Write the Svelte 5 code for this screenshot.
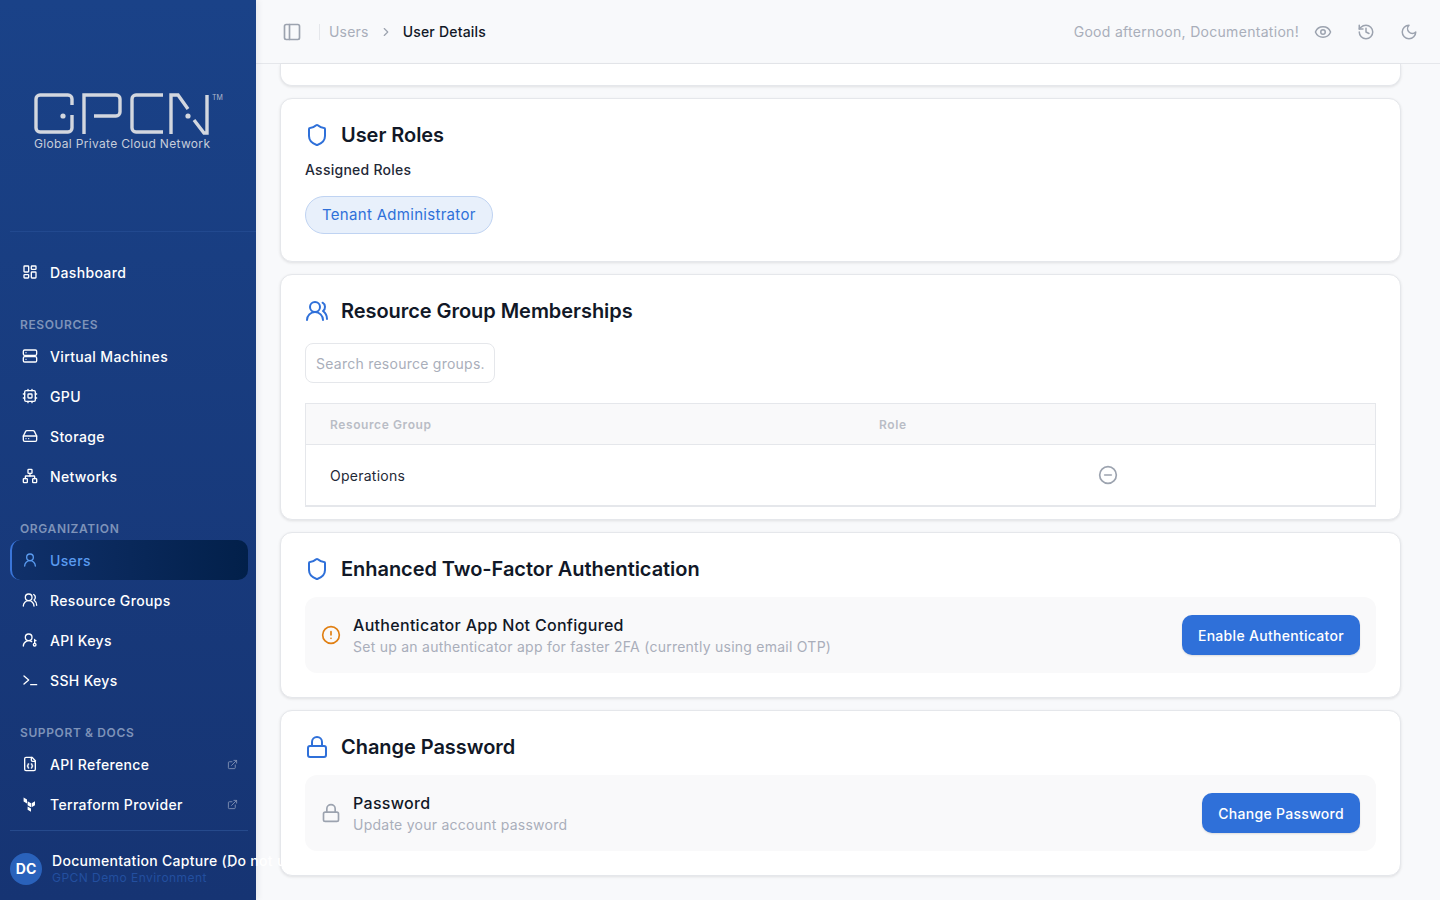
<script>
  const icons = {
    dashboard: '<rect width="7" height="9" x="3" y="3" rx="1"/><rect width="7" height="5" x="14" y="3" rx="1"/><rect width="7" height="9" x="14" y="12" rx="1"/><rect width="7" height="5" x="3" y="16" rx="1"/>',
    server: '<rect width="20" height="8" x="2" y="3" rx="2"/><rect width="20" height="8" x="2" y="13" rx="2"/><path d="M6 7h.01M6 17h.01"/>',
    cpu: '<rect width="16" height="16" x="4" y="4" rx="2"/><rect width="6" height="6" x="9" y="9" rx="1"/><path d="M15 2v2M15 20v2M2 15h2M2 9h2M20 15h2M20 9h2M9 2v2M9 20v2"/>',
    drive: '<path d="M22 12H2"/><path d="M5.45 5.11 2 12v6a2 2 0 0 0 2 2h16a2 2 0 0 0 2-2v-6l-3.45-6.89A2 2 0 0 0 16.76 4H7.24a2 2 0 0 0-1.79 1.11z"/><path d="M6 16h.01M10 16h.01"/>',
    network: '<rect x="16" y="16" width="6" height="6" rx="1"/><rect x="2" y="16" width="6" height="6" rx="1"/><rect x="9" y="2" width="6" height="6" rx="1"/><path d="M5 16v-3a1 1 0 0 1 1-1h12a1 1 0 0 1 1 1v3"/><path d="M12 12V8"/>',
    user: '<circle cx="12" cy="8" r="5"/><path d="M20 21a8 8 0 0 0-16 0"/>',
    users: '<path d="M18 21a8 8 0 0 0-16 0"/><circle cx="10" cy="8" r="5"/><path d="M22 20c0-3.37-2-6.5-4-8a5 5 0 0 0-.45-8.3"/>',
    userkey: '<circle cx="10" cy="8" r="5"/><path d="M2 21a8 8 0 0 1 12.5-6.6"/><circle cx="19" cy="19" r="2"/><path d="M19 17v-6M19 13h2"/>',
    terminal: '<path d="m3 18 7-6-7-6"/><path d="M13 19h9"/>',
    filecode: '<path d="M15 2H6a2 2 0 0 0-2 2v16a2 2 0 0 0 2 2h12a2 2 0 0 0 2-2V7Z"/><path d="M14 2v4a2 2 0 0 0 2 2h4"/><path d="M10 12a1 1 0 0 0-1 1v1a1 1 0 0 1-1 1 1 1 0 0 1 1 1v1a1 1 0 0 0 1 1"/><path d="M14 18a1 1 0 0 0 1-1v-1a1 1 0 0 1 1-1 1 1 0 0 1-1-1v-1a1 1 0 0 0-1-1"/>',
    panel: '<rect width="18" height="18" x="3" y="3" rx="2"/><path d="M9 3v18"/>',
    chevron: '<path d="m9 18 6-6-6-6"/>',
    eye: '<path d="M2.062 12.348a1 1 0 0 1 0-.696 10.75 10.75 0 0 1 19.876 0 1 1 0 0 1 0 .696 10.75 10.75 0 0 1-19.876 0"/><circle cx="12" cy="12" r="3"/>',
    history: '<path d="M3 12a9 9 0 1 0 9-9 9.75 9.75 0 0 0-6.74 2.74L3 8"/><path d="M3 3v5h5"/><path d="M12 7v5l4 2"/>',
    moon: '<path d="M12 3a6 6 0 0 0 9 9 9 9 0 1 1-9-9Z"/>',
    shield: '<path d="M20 13c0 5-3.5 7.5-7.66 8.95a1 1 0 0 1-.67-.01C7.5 20.5 4 18 4 13V6a1 1 0 0 1 1-1c2 0 4.5-1.2 6.24-2.72a1.17 1.17 0 0 1 1.52 0C14.51 3.81 17 5 19 5a1 1 0 0 1 1 1z"/>',
    lock: '<rect width="18" height="11" x="3" y="11" rx="2"/><path d="M7 11V7a5 5 0 0 1 10 0v4"/>',
    alert: '<circle cx="12" cy="12" r="10"/><path d="M12 8v4M12 16h.01"/>',
    minus: '<circle cx="12" cy="12" r="10"/><path d="M8 12h8"/>',
    external: '<path d="M15 3h6v6"/><path d="M10 14 21 3"/><path d="M18 13v6a2 2 0 0 1-2 2H5a2 2 0 0 1-2-2V8a2 2 0 0 1 2-2h6"/>',
  };

  const sections = [
    { title: 'RESOURCES', items: [
      { label: 'Virtual Machines', icon: 'server' },
      { label: 'GPU', icon: 'cpu' },
      { label: 'Storage', icon: 'drive' },
      { label: 'Networks', icon: 'network' },
    ]},
    { title: 'ORGANIZATION', items: [
      { label: 'Users', icon: 'user', active: true },
      { label: 'Resource Groups', icon: 'users' },
      { label: 'API Keys', icon: 'userkey' },
      { label: 'SSH Keys', icon: 'terminal' },
    ]},
    { title: 'SUPPORT & DOCS', items: [
      { label: 'API Reference', icon: 'filecode', external: true },
      { label: 'Terraform Provider', icon: 'terraform', external: true },
    ]},
  ];
</script>

{#snippet icon(name, size, cls)}
  <svg class={cls} width={size} height={size} viewBox="0 0 24 24" fill="none" stroke="currentColor" stroke-width="2" stroke-linecap="round" stroke-linejoin="round">{@html icons[name]}</svg>
{/snippet}

{#snippet navItem(item)}
  <div class="nav-item" class:active={item.active}>
    {#if item.icon === 'terraform'}
      <svg class="nav-icon" width="16" height="16" viewBox="0 0 16 16" fill="currentColor"><path d="M5.6 5.2 9 7.2v4L5.6 9.2zM9.6 7.2l3.4-2v4l-3.4 2zM1.6 1.6 5 3.6v4l-3.4-2zM5.6 10.4l3.4 2v3.4l-3.4-2z"/></svg>
    {:else}
      {@render icon(item.icon, 16, 'nav-icon')}
    {/if}
    <span>{item.label}</span>
    {#if item.external}
      {@render icon('external', 11, 'ext')}
    {/if}
  </div>
{/snippet}

<div class="app">
  <aside class="sidebar">
    <div class="brand">
      <div class="logo">
        <svg width="190" height="42" viewBox="0 0 190 42" fill="none" stroke="#d3d7df" stroke-width="3.4">
          <path d="M38 12V6a4 4 0 0 0-4-4H6a4 4 0 0 0-4 4v29a4 4 0 0 0 4 4h28a4 4 0 0 0 4-4V22"/>
          <circle cx="29" cy="23" r="2.6" fill="#d3d7df" stroke="none"/>
          <path d="M50 41V2h32a4 4 0 0 1 4 4v13a4 4 0 0 1-4 4H60"/>
          <path d="M129 2h-27a4 4 0 0 0-4 4v29a4 4 0 0 0 4 4h27"/>
          <path d="M137 41V2l7 0 10 14"/>
          <circle cx="154" cy="23" r="2.6" fill="#d3d7df" stroke="none"/>
          <path d="M173 2v38h-3l-10-13"/>
        </svg>
        <span class="tm">TM</span>
        <span class="tagline">Global Private Cloud Network</span>
      </div>
    </div>

    <nav class="nav">
      <div class="nav-top">
        {@render navItem({ label: 'Dashboard', icon: 'dashboard' })}
      </div>
      {#each sections as section}
        <div class="nav-section">
          <div class="nav-title">{section.title}</div>
          {#each section.items as item}
            {@render navItem(item)}
          {/each}
        </div>
      {/each}
    </nav>

    <div class="account">
      <div class="avatar">DC</div>
      <div class="account-text">
        <div class="account-name">Documentation Capture (Do not use)</div>
        <div class="account-env">GPCN Demo Environment</div>
      </div>
      <span class="dots">...</span>
    </div>
  </aside>

  <div class="main">
    <header class="topbar">
      <button class="icon-btn">{@render icon('panel', 20, 'grey')}</button>
      <div class="crumbs">
        <span class="crumb-muted">Users</span>
        {@render icon('chevron', 14, 'grey')}
        <span class="crumb-current">User Details</span>
      </div>
      <div class="top-right">
        <span class="greeting">Good afternoon, Documentation!</span>
        {@render icon('eye', 18, 'grey')}
        {@render icon('history', 18, 'grey gap-l')}
        {@render icon('moon', 18, 'grey gap-l')}
      </div>
    </header>

    <div class="content">
      <div class="card stub"></div>

      <section class="card roles">
        <div class="card-head">
          {@render icon('shield', 24, 'blue')}
          <h2>User Roles</h2>
        </div>
        <div class="assigned">Assigned Roles</div>
        <span class="role-pill">Tenant Administrator</span>
      </section>

      <section class="card groups">
        <div class="card-head">
          {@render icon('users', 24, 'blue')}
          <h2>Resource Group Memberships</h2>
        </div>
        <input class="search" placeholder="Search resource groups..." />
        <div class="table">
          <div class="row head">
            <span>Resource Group</span>
            <span>Role</span>
            <span></span>
          </div>
          <div class="row body">
            <span>Operations</span>
            <span></span>
            <span>{@render icon('minus', 20, 'grey')}</span>
          </div>
        </div>
      </section>

      <section class="card">
        <div class="card-head">
          {@render icon('shield', 24, 'blue')}
          <h2>Enhanced Two-Factor Authentication</h2>
        </div>
        <div class="panel">
          {@render icon('alert', 20, 'orange')}
          <div class="panel-text">
            <div class="panel-title">Authenticator App Not Configured</div>
            <div class="panel-sub">Set up an authenticator app for faster 2FA (currently using email OTP)</div>
          </div>
          <button class="btn">Enable Authenticator</button>
        </div>
      </section>

      <section class="card">
        <div class="card-head">
          {@render icon('lock', 24, 'blue')}
          <h2>Change Password</h2>
        </div>
        <div class="panel">
          {@render icon('lock', 20, 'grey')}
          <div class="panel-text">
            <div class="panel-title">Password</div>
            <div class="panel-sub">Update your account password</div>
          </div>
          <button class="btn">Change Password</button>
        </div>
      </section>
    </div>
  </div>
</div>

<style>
  :global(body) {
    margin: 0;
    background: #f8f9fb;
    font-family: Inter, "Noto Sans", sans-serif;
    overflow: hidden;
  }

  .app {
    display: flex;
    height: 900px;
    width: 1440px;
    overflow: hidden;
  }

  .sidebar {
    width: 256px;
    flex: none;
    display: flex;
    flex-direction: column;
    background: linear-gradient(180deg, #1a4288 0%, #163473 100%);
    box-shadow: 2px 0 6px rgba(20, 30, 60, 0.08);
    position: relative;
    z-index: 2;
  }

  .brand {
    height: 232px;
    box-sizing: border-box;
    border-bottom: 1px solid #22498f;
    margin-left: 10px;
    padding: 93px 0 0 24px;
  }

  .logo {
    position: relative;
    width: 190px;
  }

  .logo svg {
    display: block;
  }

  .tm {
    position: absolute;
    left: 178px;
    top: 0;
    font-size: 7px;
    color: #aeb8cd;
  }

  .tagline {
    display: block;
    margin-top: 1px;
    font-size: 12px;
    line-height: 15px;
    letter-spacing: 0.32px;
    color: #c6cdda;
    white-space: nowrap;
  }

  .nav {
    flex: 1;
    padding: 20px 8px 0 10px;
  }

  .nav-section {
    margin-top: 12px;
  }

  .nav-title {
    height: 32px;
    padding: 13px 0 0 10px;
    box-sizing: border-box;
    font-size: 12px;
    line-height: 16px;
    font-weight: 600;
    letter-spacing: 0.62px;
    color: #7e93b9;
  }

  .nav-item {
    height: 40px;
    display: flex;
    align-items: center;
    gap: 16px;
    padding: 0 12px;
    box-sizing: border-box;
    border-radius: 10px;
    font-size: 14px;
    font-weight: 500;
    letter-spacing: 0.35px;
    color: #fff;
  }

  .nav-item span {
    flex: 1;
    margin-left: -4px;
  }

  .nav-item.active {
    background: linear-gradient(90deg, #10306a 0%, #02204a 100%);
    border-left: 2px solid #3a75d8;
    padding-left: 10px;
    color: #5a9bf0;
  }

  .ext {
    opacity: 0.45;
    margin-right: -2px;
  }

  .account {
    height: 70px;
    margin: 0 8px 0 10px;
    border-top: 1px solid #264a8c;
    display: flex;
    align-items: center;
    gap: 10px;
    position: relative;
    box-sizing: border-box;
    padding-top: 6px;
  }

  .avatar {
    width: 32px;
    height: 32px;
    flex: none;
    border-radius: 50%;
    background: #2a62bb;
    color: #fff;
    font-size: 14px;
    font-weight: 700;
    display: flex;
    align-items: center;
    justify-content: center;
  }

  .account-text {
    white-space: nowrap;
    min-width: 0;
  }

  .account-name {
    font-size: 14px;
    line-height: 18px;
    font-weight: 500;
    letter-spacing: 0.3px;
    color: #fff;
  }

  .account-env {
    font-size: 12px;
    line-height: 16px;
    letter-spacing: 0.45px;
    color: #234f9f;
  }

  .dots {
    position: absolute;
    left: 213px;
    top: 24px;
    font-size: 12px;
    color: #cfd8e8;
  }

  .main {
    flex: 1;
    min-width: 0;
    display: flex;
    flex-direction: column;
  }

  .topbar {
    height: 64px;
    flex: none;
    box-sizing: border-box;
    border-bottom: 1px solid #e5e7eb;
    display: flex;
    align-items: center;
    padding: 0 22px 0 26px;
  }

  .icon-btn {
    background: none;
    border: 0;
    padding: 0;
    height: 20px;
    display: flex;
  }

  .crumbs {
    display: flex;
    align-items: center;
    gap: 10px;
    margin-left: 17px;
    padding-left: 9px;
    border-left: 1px solid #e5e7eb;
    font-size: 14px;
    letter-spacing: 0.2px;
    line-height: 16px;
  }

  .crumb-muted {
    color: #a9aeba;
  }

  .crumb-current {
    color: #111827;
    font-weight: 500;
  }

  .top-right {
    margin-left: auto;
    display: flex;
    align-items: center;
    gap: 15px;
  }

  .greeting {
    font-size: 14px;
    letter-spacing: 0.3px;
    color: #a9aeba;
    margin-right: 0;
  }

  .grey {
    color: #9ca3af;
    display: block;
  }

  :global(.gap-l) {
    margin-left: 10px;
  }

  .blue {
    color: #2f70d9;
    flex: none;
  }

  .orange {
    color: #e07f12;
    flex: none;
  }

  .content {
    flex: 1;
    padding: 0 39px 24px 24px;
    display: flex;
    flex-direction: column;
    gap: 12px;
  }

  .card {
    background: #fff;
    border: 1px solid #e5e7eb;
    border-radius: 12px;
    box-shadow: 0 1px 3px rgba(0, 0, 0, 0.1);
    padding: 24px;
    box-sizing: border-box;
    height: 166px;
  }

  .stub {
    height: 22px;
    padding: 0;
    border-top: 0;
    border-radius: 0 0 12px 12px;
  }

  .roles {
    height: 164px;
  }

  .groups {
    height: 246px;
  }

  .card-head {
    display: flex;
    align-items: center;
    gap: 12px;
    height: 24px;
  }

  h2 {
    margin: 0;
    font-size: 20px;
    font-weight: 600;
    letter-spacing: -0.05px;
    color: #111827;
  }

  .assigned {
    margin-top: 13px;
    font-size: 14px;
    line-height: 20px;
    letter-spacing: 0.25px;
    color: #1f2937;
    font-weight: 500;
  }

  .role-pill {
    display: inline-block;
    margin-top: 16px;
    padding: 0 16px;
    height: 38px;
    line-height: 36px;
    box-sizing: border-box;
    border-radius: 19px;
    border: 1px solid #bfd3f2;
    background: #e8f0fb;
    color: #2f70d9;
    font-size: 15px;
    letter-spacing: 0.3px;
  }

  .search {
    display: block;
    margin-top: 20px;
    width: 190px;
    height: 40px;
    box-sizing: border-box;
    border: 1px solid #e5e7eb;
    border-radius: 8px;
    padding: 0 10px;
    font: inherit;
    font-size: 14px;
    letter-spacing: 0.25px;
    outline: none;
    background: #fff;
  }

  .search::placeholder {
    color: #a9aeba;
  }

  .table {
    margin-top: 20px;
    border: 1px solid #e5e7eb;
    border-bottom-width: 2px;
  }

  .row {
    display: grid;
    grid-template-columns: 549px 219px 1fr;
    align-items: center;
    padding-left: 24px;
  }

  .row.head {
    height: 41px;
    background: #f9f9fa;
    border-bottom: 1px solid #e5e7eb;
    box-sizing: border-box;
    font-size: 12px;
    font-weight: 600;
    letter-spacing: 0.6px;
    color: #b9bdc6;
  }

  .row.body {
    height: 60px;
    font-size: 14px;
    letter-spacing: 0.25px;
    color: #1f2937;
  }

  .panel {
    margin-top: 16px;
    height: 76px;
    box-sizing: border-box;
    background: #f9f9fa;
    border-radius: 12px;
    display: flex;
    align-items: center;
    padding: 0 16px;
    gap: 12px;
  }

  .panel-text {
    flex: 1;
    padding-top: 2px;
  }

  .panel-title {
    font-size: 16px;
    line-height: 20px;
    font-weight: 500;
    letter-spacing: 0.3px;
    color: #111827;
  }

  .panel-sub {
    font-size: 14px;
    line-height: 20px;
    margin-top: 2px;
    letter-spacing: 0.25px;
    color: #a9aeba;
  }

  .btn {
    height: 40px;
    padding: 0 16px;
    border: 0;
    border-radius: 10px;
    background: #2f70d9;
    color: #fff;
    font: inherit;
    font-size: 14px;
    font-weight: 500;
    letter-spacing: 0.3px;
    box-shadow: 0 1px 2px rgba(0, 0, 0, 0.12);
  }
</style>
